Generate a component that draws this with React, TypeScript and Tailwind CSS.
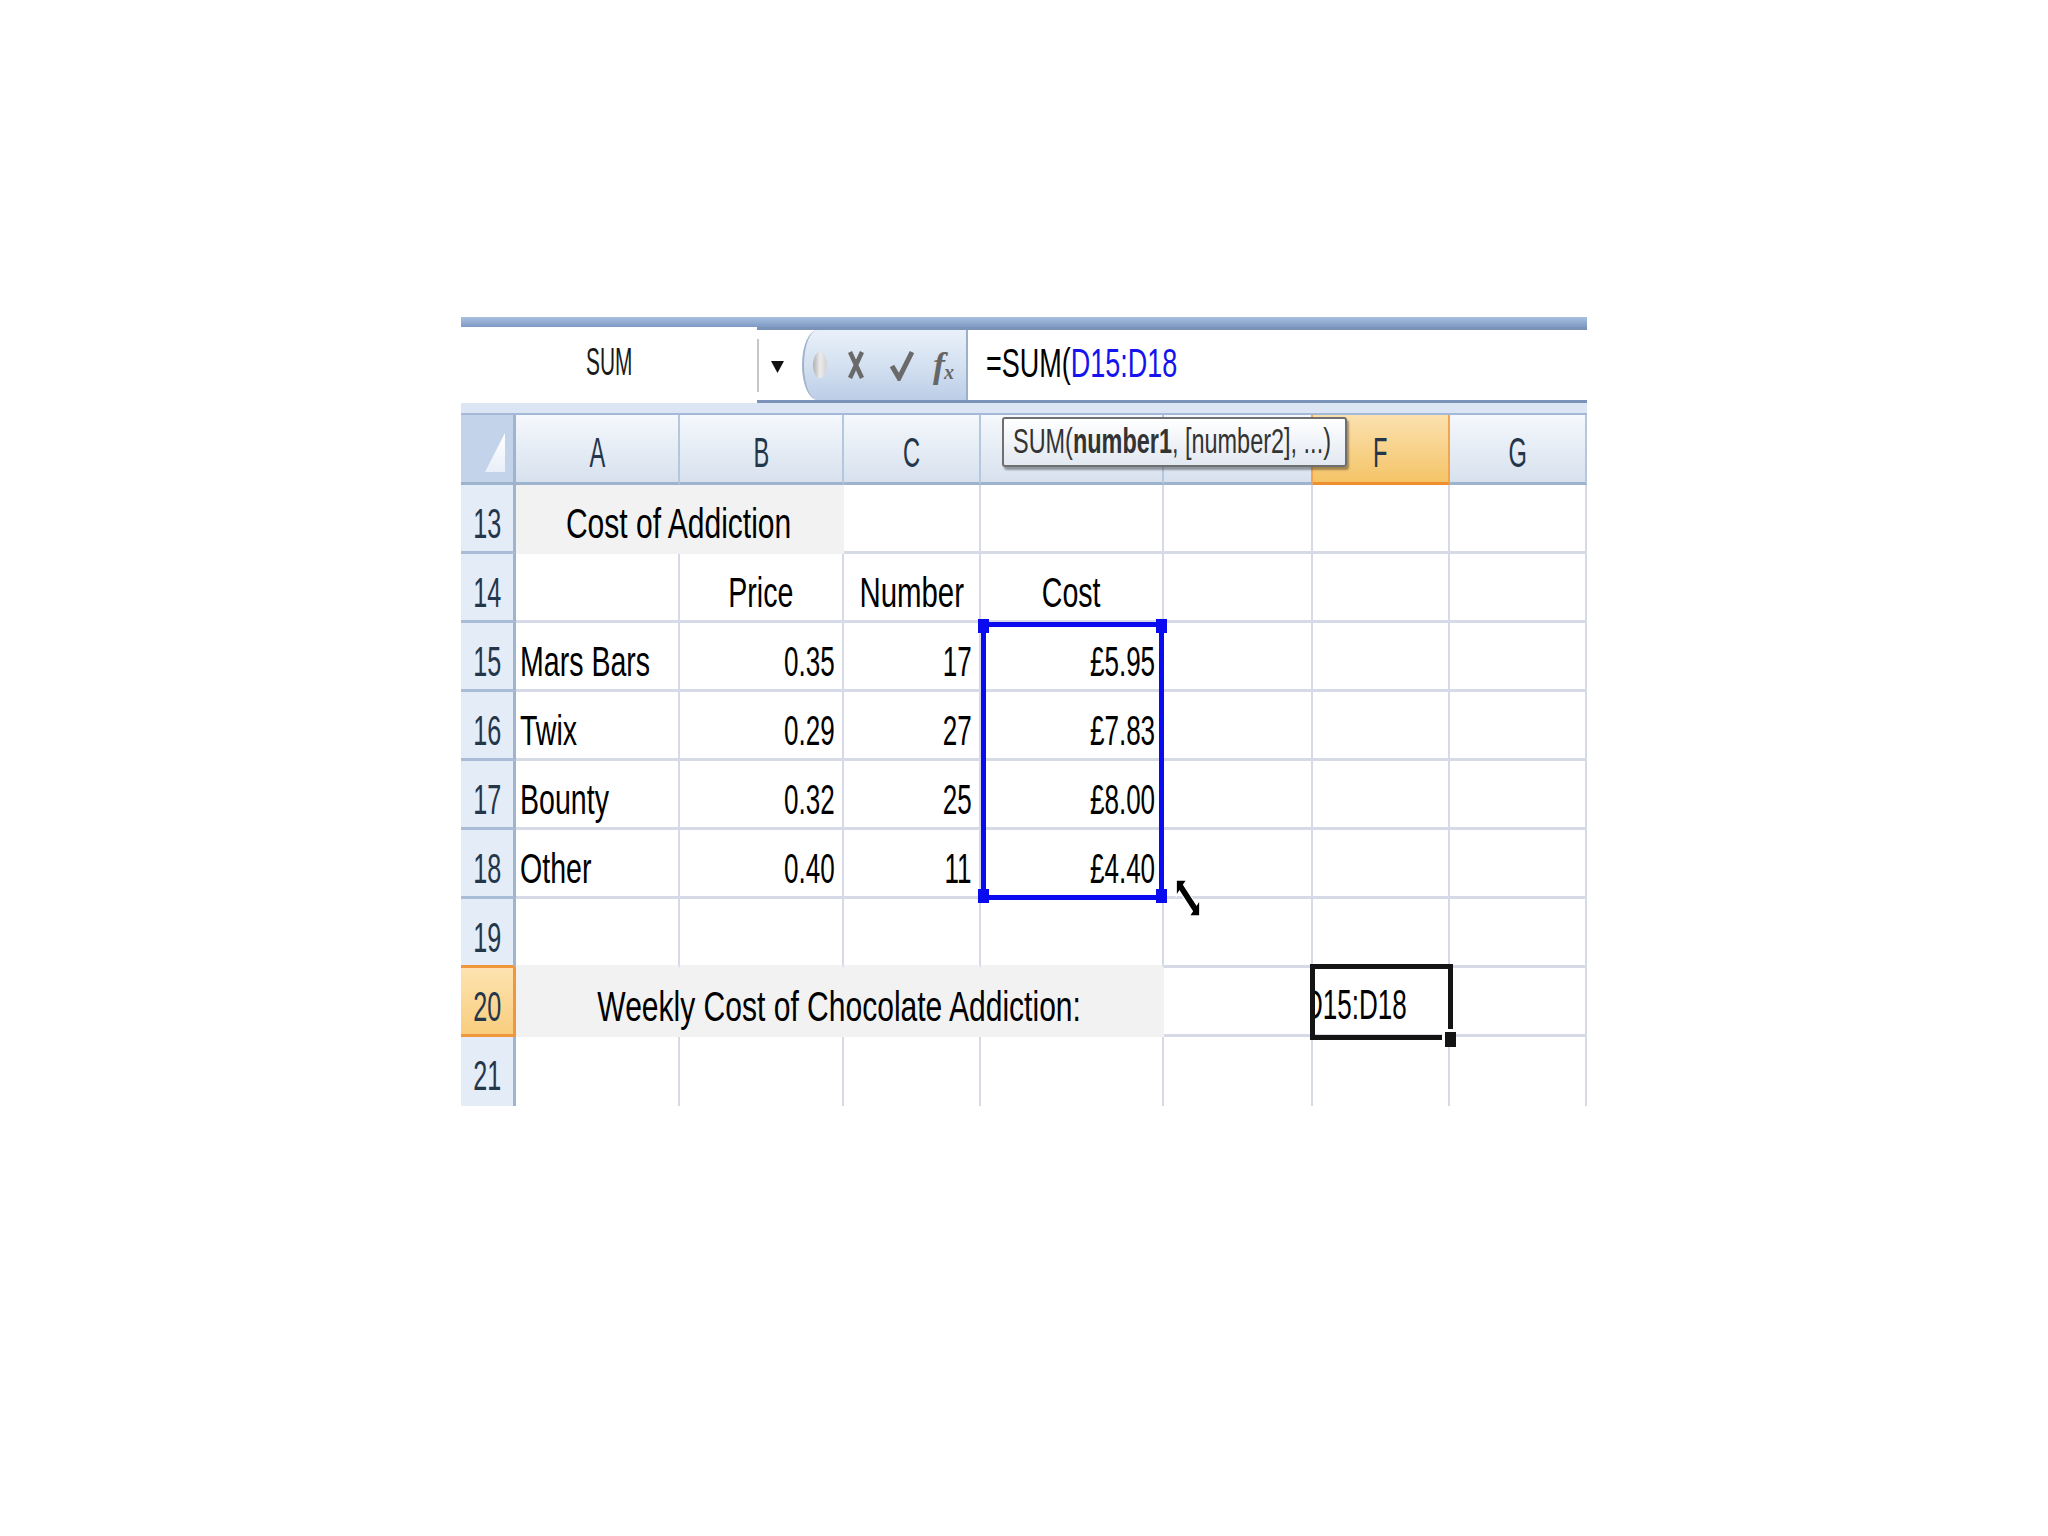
import React from "react";

const FONT = "font-['Liberation_Sans',Arial,sans-serif]";

function Txt({ children, cls }: { children: React.ReactNode; cls: string }) {
  return <span className={`inline-block whitespace-nowrap leading-none ${cls}`}>{children}</span>;
}

const G = "border-r-2 border-b-[3px] border-r-[#d5dae6] border-b-[#d5dae6] bg-white";
const G_GRAYB = "border-r-2 border-b-[3px] border-r-[#d5dae6] border-b-[#f2f2f2] bg-white";
const G_NOB = "border-r-2 border-r-[#d5dae6] bg-white";
const GRAY = "border-r-2 border-b-[3px] border-r-[#f2f2f2] border-b-[#f2f2f2] bg-[#f2f2f2]";

const TXT = "text-[42px] text-black scale-x-[0.68]";
const TITLE = "text-[42px] text-black scale-x-[0.715]";
const NUM = "text-[42px] text-black scale-x-[0.62] origin-right";

const RH = "bg-[#e4ecf7] border-r-[3px] border-b-[3px] border-r-[#9eb4cf] border-b-[#a9bdd6]";
const RH_19 = "bg-[#e4ecf7] border-r-[3px] border-b-[3px] border-r-[#9eb4cf] border-b-[#f0963b]";
const RH_20 =
  "bg-linear-to-b from-[#fde3b0] to-[#f9cd7e] border-r-[3px] border-b-[3px] border-r-[#f0963b] border-b-[#f0963b]";
const RH_21 = "bg-[#e4ecf7] border-r-[3px] border-r-[#9eb4cf]";

const CH =
  "flex items-end justify-center pb-[8px] border-r-2 border-b-[3px] border-r-[#b5c7de] border-b-[#9db3ce] bg-linear-to-b from-[#f5f8fc] to-[#d7e1ee]";
const CH_E =
  "flex items-end justify-center pb-[8px] border-r-2 border-b-[3px] border-r-[#f0a54e] border-b-[#9db3ce] bg-linear-to-b from-[#f5f8fc] to-[#d7e1ee]";
const CH_F =
  "flex items-end justify-center pb-[8px] border-r-2 border-b-[3px] border-r-[#f0a54e] border-b-[#ef8e2e] bg-linear-to-b from-[#fbe1ae] to-[#f4c466]";

function RowHead({ n, cls, pb = "pb-[6px]" }: { n: number; cls: string; pb?: string }) {
  return (
    <div className={`flex items-end justify-center ${pb} ${cls}`}>
      <Txt cls="text-[42px] text-[#24364a] scale-x-[0.6]">{n}</Txt>
    </div>
  );
}

function Cell({
  cls,
  align = "left",
  children,
  span = "",
}: {
  cls: string;
  align?: "left" | "center" | "right";
  children?: React.ReactNode;
  span?: string;
}) {
  const j =
    align === "left" ? "justify-start pl-[4px] pr-[7px]" : align === "center" ? "justify-center px-[7px]" : "justify-end px-[7px]";
  return <div className={`flex items-end pb-[6px] ${j} ${span} ${cls}`}>{children}</div>;
}

const data = [
  ["Mars Bars", "0.35", "17", "£5.95"],
  ["Twix", "0.29", "27", "£7.83"],
  ["Bounty", "0.32", "25", "£8.00"],
  ["Other", "0.40", "11", "£4.40"],
];

export default function App() {
  return (
    <div className={`min-h-[1536px] w-[2048px] bg-white ${FONT}`}>
      <div className="pt-[317px] pl-[461px]">
        <div className="relative w-[1126px]">
          {/* top band */}
          <div className="h-[10px] bg-linear-to-b from-[#a9c0e0] to-[#7e9ac5]" />

          {/* name box + formula bar */}
          <div className="flex h-[76px]">
            <div className="w-[296px] flex justify-center items-end pb-[22px] bg-white">
              <Txt cls="text-[38px] text-[#1a1a1a] scale-x-[0.55]">SUM</Txt>
            </div>
            <div className="flex-1 flex border-y-[3px] border-[#7b93b8] bg-white">
              <div className="w-[45px] flex items-center bg-white">
                <div className="h-[53px] w-[2px] bg-[#c6c6c6]" />
                <svg className="ml-[12px] mt-[4px]" width="13" height="12" viewBox="0 0 13 12">
                  <polygon points="0,0 13,0 6.5,12" fill="#111" />
                </svg>
              </div>
              <div className="w-[166px] flex items-center pl-[9px] rounded-l-[16px_36px] border-l-2 border-r-2 border-l-[#9fb2cc] border-r-[#9db0ca] bg-linear-to-b from-[#eaf0f9] via-[#d4e1f1] to-[#bccde6]">
                <div className="w-[14px] h-[26px] rounded-[50%] bg-linear-to-r from-[#b0b0b0] via-[#ececec] to-[#d2d2d2]" />
                <svg className="ml-[21px]" width="16" height="30" viewBox="0 0 16 30">
                  <path d="M2 2 L14 28 M14 2 L2 28" stroke="#6a6a6a" strokeWidth="4.5" fill="none" />
                </svg>
                <svg className="ml-[25px]" width="25" height="32" viewBox="0 0 25 32">
                  <path d="M3 17 L10 29 L23 3" stroke="#6a6a6a" strokeWidth="5" fill="none" strokeLinejoin="miter" />
                </svg>
                <span className="ml-[19px] inline-flex items-end leading-none font-['Liberation_Serif',serif] italic font-bold text-[#666666]">
                  <span className="text-[36px]">f</span>
                  <span className="text-[20px] -ml-[1px] mb-[1px]">x</span>
                </span>
              </div>
              <div className="flex-1 flex items-end pb-[17px] pl-[18px] bg-white">
                <Txt cls="text-[40px] text-black scale-x-[0.675] origin-left">
                  =SUM(<span className="text-[#1414ee]">D15:D18</span>
                </Txt>
              </div>
            </div>
          </div>

          {/* strip */}
          <div className="h-[12px] bg-[#dbe5f3] border-b-2 border-[#a3b9d7]" />

          {/* grid */}
          <div className="grid grid-cols-[55px_164px_164px_137px_183px_149px_137px_137px] grid-rows-[70px_repeat(9,69px)]">
            {/* header row */}
            <div className="relative border-r-[3px] border-b-[3px] border-r-[#9eb4cf] border-b-[#9db3ce] bg-[#c3d4ea]">
              <svg className="absolute left-0 top-0" width="52" height="67" viewBox="0 0 52 67">
                <defs>
                  <linearGradient id="tri" x1="0" y1="0" x2="0" y2="1">
                    <stop offset="0" stopColor="#ffffff" />
                    <stop offset="1" stopColor="#e9eff8" />
                  </linearGradient>
                </defs>
                <polygon points="44,18 44,57 24,57" fill="url(#tri)" />
              </svg>
            </div>
            {["A", "B", "C"].map((c) => (
              <div key={c} className={CH}>
                <Txt cls="text-[43px] text-[#24364a] scale-x-[0.55]">{c}</Txt>
              </div>
            ))}
            {/* D header: letter hidden under the function tooltip */}
            <div className={CH} />
            {/* E header: letter hidden under the function tooltip */}
            <div className={CH_E} />
            <div className={CH_F}>
              <Txt cls="text-[43px] text-[#24364a] scale-x-[0.55]">F</Txt>
            </div>
            <div className={CH}>
              <Txt cls="text-[43px] text-[#24364a] scale-x-[0.55]">G</Txt>
            </div>

            {/* row 13 */}
            <RowHead n={13} cls={RH} />
            <Cell cls={GRAY} align="center" span="col-span-2">
              <Txt cls={TITLE}>Cost of Addiction</Txt>
            </Cell>
            <Cell cls={G} />
            <Cell cls={G} />
            <Cell cls={G} />
            <Cell cls={G} />
            <Cell cls={G} />

            {/* row 14 */}
            <RowHead n={14} cls={RH} />
            <Cell cls={G} />
            <Cell cls={G} align="center">
              <Txt cls={TXT}>Price</Txt>
            </Cell>
            <Cell cls={G} align="center">
              <Txt cls="text-[42px] text-black scale-x-[0.7]">Number</Txt>
            </Cell>
            <Cell cls={G} align="center">
              <Txt cls={TXT}>Cost</Txt>
            </Cell>
            <Cell cls={G} />
            <Cell cls={G} />
            <Cell cls={G} />

            {/* rows 15-18 */}
            {data.map((r, i) => (
              <React.Fragment key={r[0]}>
                <RowHead n={15 + i} cls={RH} />
                <Cell cls={G}>
                  <Txt cls={`${TXT} origin-left`}>{r[0]}</Txt>
                </Cell>
                <Cell cls={G} align="right">
                  <Txt cls={NUM}>{r[1]}</Txt>
                </Cell>
                <Cell cls={G} align="right">
                  <Txt cls={NUM}>{r[2]}</Txt>
                </Cell>
                <Cell cls={G} align="right">
                  <Txt cls={NUM}>{r[3]}</Txt>
                </Cell>
                <Cell cls={G} />
                <Cell cls={G} />
                <Cell cls={G} />
              </React.Fragment>
            ))}

            {/* row 19 */}
            <RowHead n={19} cls={RH_19} />
            <Cell cls={G_GRAYB} />
            <Cell cls={G_GRAYB} />
            <Cell cls={G_GRAYB} />
            <Cell cls={G_GRAYB} />
            <Cell cls={G} />
            <Cell cls={G} />
            <Cell cls={G} />

            {/* row 20 */}
            <RowHead n={20} cls={RH_20} />
            <Cell cls={GRAY} align="center" span="col-span-4">
              <Txt cls={TITLE}>Weekly Cost of Chocolate Addiction:</Txt>
            </Cell>
            <Cell cls={G} />
            <Cell cls={G} />
            <Cell cls={G} />

            {/* row 21 */}
            <RowHead n={21} cls={RH_21} pb="pb-[9px]" />
            <Cell cls={G_NOB} />
            <Cell cls={G_NOB} />
            <Cell cls={G_NOB} />
            <Cell cls={G_NOB} />
            <Cell cls={G_NOB} />
            <Cell cls={G_NOB} />
            <Cell cls={G_NOB} />
          </div>

          {/* selection range D15:D18 */}
          <div className="absolute left-[520px] top-[305px] w-[183px] h-[278px] border-[5px] border-[#0b0bf0]" />
          <div className="absolute left-[517px] top-[302px] w-[11px] h-[14px] bg-[#0b0bf0]" />
          <div className="absolute left-[695px] top-[302px] w-[11px] h-[14px] bg-[#0b0bf0]" />
          <div className="absolute left-[517px] top-[572px] w-[11px] h-[14px] bg-[#0b0bf0]" />
          <div className="absolute left-[695px] top-[572px] w-[11px] h-[14px] bg-[#0b0bf0]" />

          {/* resize cursor */}
          <svg
            className="absolute left-[714px] top-[561px]"
            width="26"
            height="40"
            viewBox="0 0 20 20"
            preserveAspectRatio="none"
          >
            <path
              d="M1 1 L9 1 L6.6 3.4 L16.6 13.4 L19 11 L19 19 L11 19 L13.4 16.6 L3.4 6.6 L1 9 Z"
              fill="#000"
              stroke="#fff"
              strokeWidth="0.8"
            />
          </svg>

          {/* active cell F20 (edit mode, text scrolled) */}
          <div className="absolute left-[849px] top-[647px] w-[143px] h-[76px] border-[5px] border-[#141414] overflow-hidden flex items-end pb-[9px]">
            <Txt cls="text-[42px] text-black scale-x-[0.62] origin-left -ml-[11px]">D15:D18</Txt>
          </div>
          <div className="absolute left-[981px] top-[712px] w-[14px] h-[18px] bg-[#141414] border-t-[3px] border-l-[3px] border-white" />

          {/* function tooltip */}
          <div className="absolute left-[541px] top-[100px] w-[345px] h-[50px] rounded-[3px] border-2 border-[#6f6f6f] bg-linear-to-b from-[#ffffff] to-[#e2e8f1] shadow-[2px_3px_2px_rgba(0,0,0,0.35)] flex items-end pb-[7px] pl-[9px]">
            <Txt cls="text-[35px] text-[#333333] scale-x-[0.67] origin-left">
              SUM(<b>number1</b>, [number2], ...)
            </Txt>
          </div>
        </div>
      </div>
    </div>
  );
}
